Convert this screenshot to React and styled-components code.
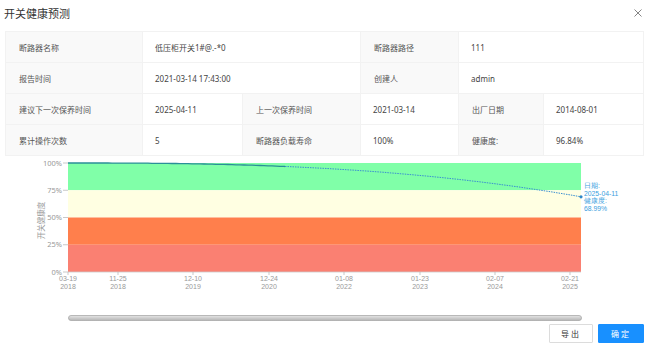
import React from "react";
import styled, { createGlobalStyle } from "styled-components";

const Global = createGlobalStyle`
  html, body { margin: 0; padding: 0; background: #fff; }
  body { font-family: "Noto Sans", "Noto Sans CJK SC", sans-serif; color: #333; }
`;

const Dialog = styled.div`
  width: 650px;
  height: 346px;
  background: #fff;
  display: flex;
  flex-direction: column;
  overflow: hidden;
`;

const Header = styled.div`
  height: 26px;
  display: flex;
  align-items: center;
  justify-content: space-between;
  padding: 0 7px 0 4px;
`;

const Title = styled.div`
  font-size: 11px;
  color: #333;
  font-family: "Noto Sans CJK SC", sans-serif;
`;

const Close = styled.button`
  border: none;
  background: none;
  padding: 0;
  width: 10px;
  height: 10px;
  display: flex;
  align-items: center;
  justify-content: center;
  color: #777;
`;

const Table = styled.div`
  margin: 5px 6px 0 5px;
  display: grid;
  grid-template-columns: 137px 100px 118px 98px 85px 1fr;
  grid-auto-rows: 31px;
  border-top: 1px solid #f2f2f2;
  border-left: 1px solid #f2f2f2;
  box-sizing: border-box;
`;

const Cell = styled.div`
  grid-column: span ${(p) => p.$span || 1};
  background: ${(p) => (p.$label ? "#f9f9f9" : "#fff")};
  border-right: 1px solid #f2f2f2;
  border-bottom: 1px solid #f2f2f2;
  display: flex;
  align-items: center;
  padding-left: ${(p) => (p.$label ? 13 : 12)}px;
  font-size: 8px;
  color: ${(p) => (p.$label ? "#555" : "#444")};
  font-family: "Noto Sans", "Noto Sans CJK SC", sans-serif;
  white-space: nowrap;
`;

const ChartBox = styled.div`
  height: 166px;
  display: flex;
`;

const Footer = styled.div`
  margin-top: 2px;
  display: flex;
  justify-content: flex-end;
  gap: 5px;
  padding-right: 6px;
`;

const Button = styled.button`
  height: 19px;
  width: ${(p) => p.$w}px;
  box-sizing: border-box;
  border: 1px solid ${(p) => (p.$primary ? "#1890ff" : "#dcdcdc")};
  background: ${(p) => (p.$primary ? "#1890ff" : "#fff")};
  color: ${(p) => (p.$primary ? "#fff" : "#333")};
  font-size: 8px;
  letter-spacing: 2px;
  font-family: "Noto Sans CJK SC", sans-serif;
  padding: 0;
  border-radius: 1px;
`;

const rows = [
  [
    { t: "断路器名称", l: true },
    { t: "低压柜开关1#@.-*0", s: 2 },
    { t: "断路器路径", l: true },
    { t: "111", s: 2 },
  ],
  [
    { t: "报告时间", l: true },
    { t: "2021-03-14 17:43:00", s: 2 },
    { t: "创建人", l: true },
    { t: "admin", s: 2 },
  ],
  [
    { t: "建议下一次保养时间", l: true },
    { t: "2025-04-11" },
    { t: "上一次保养时间", l: true },
    { t: "2021-03-14" },
    { t: "出厂日期", l: true },
    { t: "2014-08-01" },
  ],
  [
    { t: "累计操作次数", l: true },
    { t: "5" },
    { t: "断路器负载寿命", l: true },
    { t: "100%" },
    { t: "健康度:", l: true },
    { t: "96.84%" },
  ],
];

const X0 = 68;
const X1 = 581;
const TOP = 7;
const BOT = 116;
const yOf = (h) => BOT - (h / 100) * (BOT - TOP);

function health(x) {
  const t = (x - X0) / (X1 - X0);
  return 100 - 31.01 * Math.pow(t, 2.65);
}

function pathBetween(a, b) {
  const pts = [];
  for (let x = a; x <= b; x += 4) pts.push([x, yOf(health(x))]);
  pts.push([b, yOf(health(b))]);
  return pts.map((p, i) => `${i ? "L" : "M"}${p[0].toFixed(1)},${p[1].toFixed(1)}`).join(" ");
}

const xTicks = [
  [68, "03-19", "2018"],
  [118, "11-25", "2018"],
  [193, "12-10", "2019"],
  [269, "12-24", "2020"],
  [344, "01-08", "2022"],
  [420, "01-23", "2023"],
  [495, "02-07", "2024"],
  [570, "02-21", "2025"],
];

const bands = [
  ["#80ffa8", 100, 75],
  ["#ffffe2", 75, 50],
  ["#ff7f4c", 50, 25],
  ["#fa8072", 25, 0],
];

const endLines = ["日期:", "2025-04-11", "健康度:", "68.99%"];

function Chart() {
  const split = 285;
  const endY = yOf(health(X1));
  return (
    <svg width="650" height="166" viewBox="0 0 650 166" style={{ display: "block" }}>
      <defs>
        <linearGradient id="sl" x1="0" y1="0" x2="0" y2="1">
          <stop offset="0" stopColor="#e6e6e6" />
          <stop offset="1" stopColor="#b4b4b4" />
        </linearGradient>
      </defs>
      {bands.map(([c, a, b]) => (
        <rect key={a} x={X0} y={yOf(a)} width={X1 - X0} height={yOf(b) - yOf(a)} fill={c} />
      ))}
      {[100, 75, 50, 25, 0].map((v) => (
        <g key={v}>
          <line x1={63} x2={X0} y1={yOf(v)} y2={yOf(v)} stroke="#bbb" strokeWidth="0.8" />
          <text
            x={62}
            y={yOf(v) + 2.6}
            textAnchor="end"
            fontSize="7.5"
            fill="#999"
            fontFamily="Noto Sans, sans-serif"
          >
            {v}%
          </text>
        </g>
      ))}
      <text
        transform={`translate(44 ${(TOP + BOT) / 2 + 3}) rotate(-90)`}
        textAnchor="middle"
        fontSize="7.5"
        fill="#999"
        fontFamily="Noto Sans CJK SC, sans-serif"
      >
        开关健康度
      </text>
      <line x1={X0} x2={X1} y1={BOT} y2={BOT} stroke="#ccc" strokeWidth="0.8" />
      {xTicks.map(([x, m, y]) => (
        <g key={x} fontSize="7" fill="#999" fontFamily="Liberation Sans, sans-serif" textAnchor="middle">
          <line x1={x} x2={x} y1={BOT} y2={BOT + 3} stroke="#bbb" strokeWidth="0.8" />
          <text x={x} y={125.4}>{m}</text>
          <text x={x} y={133.2}>{y}</text>
        </g>
      ))}
      <path d={pathBetween(X0, split)} fill="none" stroke="#2a8f98" strokeWidth="1.3" />
      <path
        d={pathBetween(split, X1)}
        fill="none"
        stroke="#3a8fd0"
        strokeWidth="1"
        strokeDasharray="1.5 1"
      />
      <circle cx={X1} cy={endY} r="1.6" fill="#2f86c8" />
      <g fontSize="6.8" fill="#3aa0de" fontFamily="Liberation Sans, sans-serif">
        {endLines.map((t, i) => (
          <text key={t} x={584} y={32.2 + i * 7.6}>
            {t}
          </text>
        ))}
      </g>
      <rect x={68.5} y={159.5} width={513} height={5} rx="2.5" fill="url(#sl)" stroke="#a8a8a8" strokeWidth="0.8" />
    </svg>
  );
}

export default function App() {
  return (
    <>
      <Global />
      <Dialog>
        <Header>
          <Title>开关健康预测</Title>
          <Close aria-label="close">
            <svg width="8" height="8" viewBox="0 0 8 8">
              <path d="M0.5 0.5 L7.5 7.5 M7.5 0.5 L0.5 7.5" stroke="#777" strokeWidth="0.9" />
            </svg>
          </Close>
        </Header>
        <Table>
          {rows.map((r, i) =>
            r.map((c, j) => (
              <Cell key={`${i}-${j}`} $label={c.l} $span={c.s}>
                {c.t}
              </Cell>
            ))
          )}
        </Table>
        <ChartBox>
          <Chart />
        </ChartBox>
        <Footer>
          <Button $w={44}>导出</Button>
          <Button $w={46} $primary>确定</Button>
        </Footer>
      </Dialog>
    </>
  );
}
